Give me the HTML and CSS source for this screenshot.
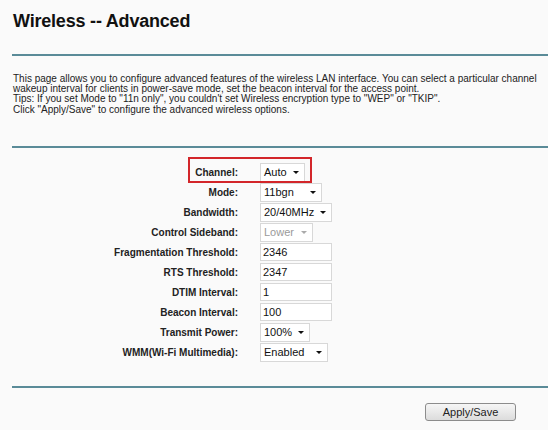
FILE: index.html
```html
<!DOCTYPE html>
<html lang="en">
<head>
<meta charset="utf-8">
<title>Wireless -- Advanced</title>
<link rel="stylesheet" href="styles.css">
</head>
<body>
<div class="page">
  <h1 class="title">Wireless -- Advanced</h1>
  <div class="rule rule-top"></div>
  <p class="intro">This page allows you to configure advanced features of the wireless LAN interface. You can select a particular channel
wakeup interval for clients in power-save mode, set the beacon interval for the access point.
Tips: If you set Mode to "11n only", you couldn't set Wireless encryption type to "WEP" or "TKIP".
Click "Apply/Save" to configure the advanced wireless options.</p>
  <div class="rule rule-mid"></div>
  <form class="form">
    <span class="highlight"></span>
    <label class="label">Channel:</label>
    <span class="select w-channel"><span class="val">Auto</span><span class="caret"></span></span>
    <label class="label">Mode:</label>
    <span class="select w-mode"><span class="val">11bgn</span><span class="caret"></span></span>
    <label class="label">Bandwidth:</label>
    <span class="select w-band"><span class="val">20/40MHz</span><span class="caret"></span></span>
    <label class="label">Control Sideband:</label>
    <span class="select w-side disabled"><span class="val">Lower</span><span class="caret"></span></span>
    <label class="label">Fragmentation Threshold:</label>
    <input class="field" type="text" value="2346">
    <label class="label">RTS Threshold:</label>
    <input class="field" type="text" value="2347">
    <label class="label">DTIM Interval:</label>
    <input class="field" type="text" value="1">
    <label class="label">Beacon Interval:</label>
    <input class="field" type="text" value="100">
    <label class="label">Transmit Power:</label>
    <span class="select w-power"><span class="val">100%</span><span class="caret"></span></span>
    <label class="label">WMM(Wi-Fi Multimedia):</label>
    <span class="select w-wmm"><span class="val">Enabled</span><span class="caret"></span></span>
  </form>
  <div class="rule rule-bottom"></div>
  <div class="actions">
    <button class="btn" type="button">Apply/Save</button>
  </div>
</div>
</body>
</html>
```
FILE: styles.css
```css
html, body {
  margin: 0;
  padding: 0;
}

body {
  background: #fafafa;
  color: #222;
  font-family: "Liberation Sans", Arial, sans-serif;
  overflow: hidden;
}

.page {
  padding-left: 12px;
}

.title {
  margin: 0;
  padding: 10px 0 0 1px;
  font-size: 18px;
  line-height: 22px;
  font-weight: bold;
  letter-spacing: -0.2px;
  color: #111;
}

.rule {
  height: 2px;
  background: #5a8b98;
}

.rule-top {
  margin-top: 22px;
}

.intro {
  margin: 17.5px 0 0 1px;
  font-size: 10px;
  line-height: 10.4px;
  white-space: pre;
  color: #222;
}

.rule-mid {
  margin-top: 31px;
}

.form {
  position: relative;
  margin: 14px 0 0;
  display: grid;
  grid-template-columns: 226px 150px;
  grid-auto-rows: 20px;
  column-gap: 22px;
  align-items: center;
}

.highlight {
  position: absolute;
  left: 176px;
  top: -5px;
  width: 124px;
  height: 26px;
  box-sizing: border-box;
  border: 2px solid #d3262a;
}

.label {
  justify-self: end;
  font-size: 10px;
  font-weight: bold;
  color: #222;
}

.select {
  display: inline-flex;
  align-items: center;
  justify-content: space-between;
  box-sizing: border-box;
  height: 19px;
  padding: 0 5px 0 3px;
  border: 1px solid #d8d8d8;
  background: #fff;
  font-size: 11px;
  color: #111;
}

.caret {
  width: 0;
  height: 0;
  border-left: 3px solid transparent;
  border-right: 3px solid transparent;
  border-top: 3px solid #111;
}

.select.disabled {
  color: #9a9a9a;
}

.select.disabled .caret {
  border-top-color: #aaa;
}

.w-channel { width: 45px; }
.w-mode { width: 62px; }
.w-band { width: 72px; }
.w-side { width: 53px; }
.w-power { width: 50px; }
.w-wmm { width: 68px; }

.field {
  box-sizing: border-box;
  width: 72px;
  height: 18px;
  margin: 0;
  padding: 0 2px;
  border: 1px solid #d8d8d8;
  background: #fff;
  font-family: "Liberation Sans", Arial, sans-serif;
  font-size: 11px;
  color: #111;
  outline: none;
}

.rule-bottom {
  margin-top: 24px;
}

.actions {
  display: flex;
  justify-content: flex-end;
  padding: 15px 32px 0 0;
}

.btn {
  box-sizing: border-box;
  width: 91px;
  height: 18px;
  padding: 0;
  border: 1px solid #8c8c8c;
  border-radius: 3px;
  background: linear-gradient(#f6f6f6, #dcdcdc);
  font-family: "Liberation Sans", Arial, sans-serif;
  font-size: 11px;
  color: #222;
}
```
